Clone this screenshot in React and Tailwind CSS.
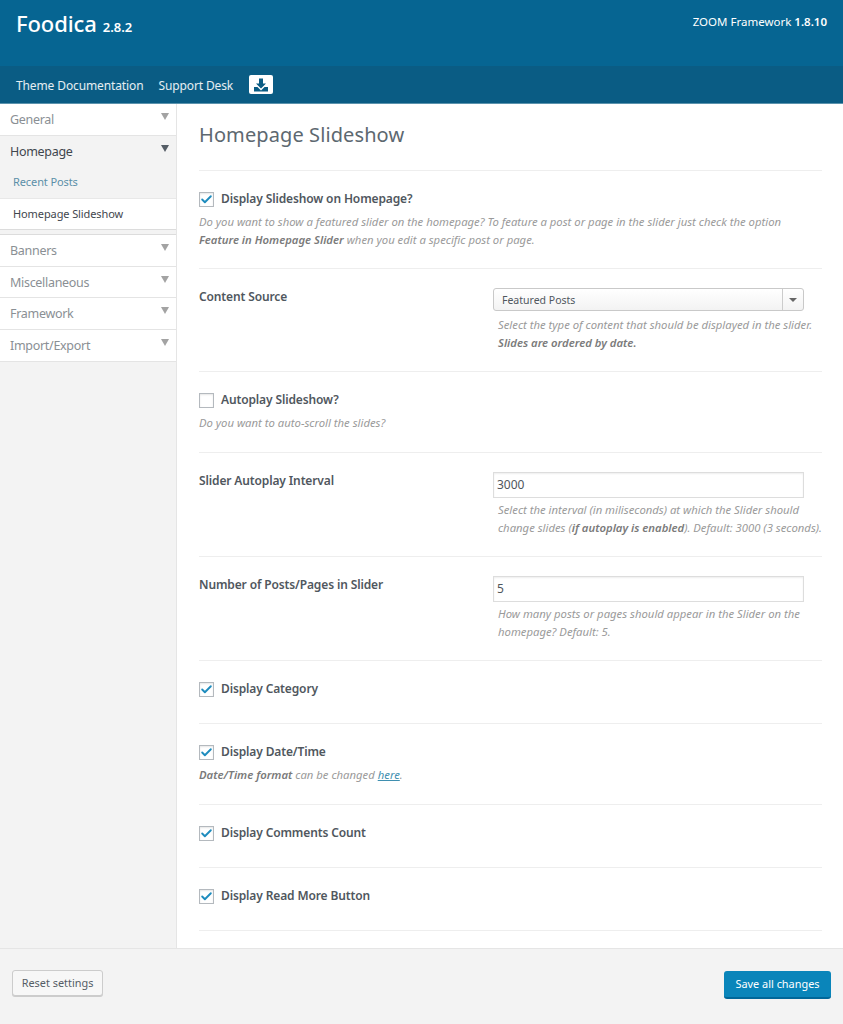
import { Check } from 'lucide-react';

const FONT = { fontFamily: '"Noto Sans", "Open Sans", sans-serif' };

function Caret({ dark }) {
  return (
    <span className={`block -mt-[8px] w-0 h-0 border-l-[4px] border-r-[4px] border-t-[7px] border-l-transparent border-r-transparent ${dark ? 'border-t-[#555d66]' : 'border-t-[#a3a3a3]'}`} />
  );
}

function MenuItem({ label, height = 'h-[31.7px] pt-[2px]' }) {
  return (
    <div className={`${height} bg-white border-b border-[#e4e4e4] flex items-center justify-between pl-[10px] pr-[7px]`}>
      <span className="text-[12.5px] tracking-[-0.3px] text-[#8a8f94]">{label}</span>
      <Caret />
    </div>
  );
}

function Sidebar() {
  return (
    <div className="w-[177px] shrink-0 bg-[#f3f3f3] border-r border-[#e5e5e5]">
      <MenuItem label="General" height="h-[32px] pt-[1px]" />
      <div className="h-[31px] flex items-center justify-between pl-[10px] pr-[7px] pt-[1px]">
        <span className="text-[12.5px] tracking-[-0.3px] text-[#3f464d]">Homepage</span>
        <Caret dark />
      </div>
      <div className="h-[31px] flex items-center pl-[13px]">
        <span className="text-[11px] tracking-[-0.1px] text-[#5b8fa8]">Recent Posts</span>
      </div>
      <div className="h-[31px] bg-white flex items-center pl-[13px] border-t border-[#e8e8e8]">
        <span className="text-[11px] tracking-[-0.1px] text-[#3f464d]">Homepage Slideshow</span>
      </div>
      <div className="h-[6px] border-y border-[#dcdcdc] bg-[#f3f3f3]" />
      <MenuItem label="Banners" />
      <MenuItem label="Miscellaneous" />
      <MenuItem label="Framework" />
      <MenuItem label="Import/Export" />
    </div>
  );
}

function CheckBox({ checked }) {
  return (
    <span className="w-[15px] h-[15px] shrink-0 bg-white border border-[#b4b9be] shadow-[inset_0_1px_2px_rgba(0,0,0,0.1)] flex items-center justify-center">
      {checked && <Check className="w-[13px] h-[13px] text-[#1e8cbe]" strokeWidth={3.5} />}
    </span>
  );
}

function CheckRow({ label, checked, height, children }) {
  return (
    <section className={`${height} border-b border-[#eeeeee] pt-[19px]`}>
      <div className="flex items-center gap-[7px] h-[18px]">
        <CheckBox checked={checked} />
        <span className="text-[12px] font-semibold tracking-[-0.13px] text-[#50575e]">{label}</span>
      </div>
      {children}
    </section>
  );
}

function Hint({ children, className = '' }) {
  return <p className={`text-[11.3px] leading-[18px] italic text-[#9a9a9a] ${className}`}>{children}</p>;
}

function FieldRow({ label, height, control, children }) {
  return (
    <section className={`${height} border-b border-[#eeeeee] flex pt-[19px]`}>
      <div className="w-[294px] shrink-0 text-[12px] font-semibold tracking-[-0.13px] text-[#50575e] leading-[18px]">{label}</div>
      <div className="flex-1 min-w-0">
        {control}
        <div className="mt-[3px] w-[331px] pl-[5px]">{children}</div>
      </div>
    </section>
  );
}

function TextBox({ value }) {
  return (
    <div className="w-[311px] h-[26px] bg-white border border-[#dddddd] shadow-[inset_0_1px_2px_rgba(0,0,0,0.07)] flex items-center pl-[3px] text-[12px] text-[#4f565c]">
      {value}
    </div>
  );
}

function SelectBox() {
  return (
    <div className="w-[311px] h-[23px] mb-[5px] bg-gradient-to-b from-white to-[#f3f3f3] border border-[#c9c9c9] rounded-[3px] flex items-center text-[10.5px] text-[#50575e]">
      <span className="flex-1 pl-[8px] pt-[2px]">Featured Posts</span>
      <span className="w-[21px] h-full border-l border-[#cccccc] flex items-center justify-center">
        <span className="w-0 h-0 border-l-[4px] border-r-[4px] border-t-[4px] border-l-transparent border-r-transparent border-t-[#666666]" />
      </span>
    </div>
  );
}

export default function App() {
  return (
    <div className="w-[843px] h-[1024px] flex flex-col bg-white overflow-hidden" style={FONT}>
      <header className="h-[66px] shrink-0 bg-[#066592] flex justify-between text-white">
        <div className="pl-[16px] pt-[8px] flex items-baseline gap-[6px]">
          <span className="text-[22px] leading-[30px] font-medium tracking-[-0.1px]">Foodica</span>
          <span className="text-[13px] font-semibold">2.8.2</span>
        </div>
        <div className="pr-[16px] pt-[13px] text-[11.5px] leading-[18px]">
          ZOOM Framework <b className="font-semibold">1.8.10</b>
        </div>
      </header>
      <nav className="h-[38px] shrink-0 bg-[#0a5c84] border-b border-[#5b93ad] flex items-center pl-[16px] text-[12px] tracking-[-0.12px] text-white/90">
        <span className="pt-[2px]">Theme Documentation</span>
        <span className="ml-[15px] pt-[2px]">Support Desk</span>
        <span className="ml-[16px] w-[24px] h-[19px] bg-white rounded-[2px] flex items-center justify-center">
          <svg viewBox="0 0 16 16" className="w-[16px] h-[16px] text-[#0a5c84]" fill="currentColor">
            <path d="M6 1.5h4v5h3L8 11.5 3 6.5h3z" />
            <path d="M1 10h3.5L8 13.5 11.5 10H15v4.5H1z" />
          </svg>
        </span>
      </nav>
      <div className="flex-1 flex min-h-0">
        <Sidebar />
        <main className="flex-1 min-w-0 pl-[22px] pr-[21px]">
          <div className="h-[67px] border-b border-[#eeeeee] pt-[16px]">
            <h1 className="text-[20px] leading-[30px] tracking-[0.1px] text-[#5d6870]">Homepage Slideshow</h1>
          </div>
          <CheckRow label="Display Slideshow on Homepage?" checked height="h-[98px]">
            <Hint className="mt-[5px]">
              Do you want to show a featured slider on the homepage? To feature a post or page in the slider just check the option <b className="font-semibold text-[#7a7a7a]">Feature in Homepage Slider</b> when you edit a specific post or page.
            </Hint>
          </CheckRow>
          <FieldRow label="Content Source" height="h-[103px]" control={<SelectBox />}>
            <Hint>
              Select the type of content that should be displayed in the slider. <b className="font-semibold text-[#7a7a7a]">Slides are ordered by date.</b>
            </Hint>
          </FieldRow>
          <CheckRow label="Autoplay Slideshow?" height="h-[81px]">
            <Hint className="mt-[5px]">Do you want to auto-scroll the slides?</Hint>
          </CheckRow>
          <FieldRow label="Slider Autoplay Interval" height="h-[104px]" control={<TextBox value="3000" />}>
            <Hint>
              Select the interval (in miliseconds) at which the Slider should change slides (<b className="font-semibold text-[#7a7a7a]">if autoplay is enabled</b>). Default: 3000 (3 seconds).
            </Hint>
          </FieldRow>
          <FieldRow label="Number of Posts/Pages in Slider" height="h-[104px]" control={<TextBox value="5" />}>
            <Hint>How many posts or pages should appear in the Slider on the homepage? Default: 5.</Hint>
          </FieldRow>
          <CheckRow label="Display Category" checked height="h-[63px]" />
          <CheckRow label="Display Date/Time" checked height="h-[81px]">
            <Hint className="mt-[5px]">
              <b className="font-semibold text-[#7a7a7a]">Date/Time format</b> can be changed <a className="underline text-[#3f8fb0]">here</a>.
            </Hint>
          </CheckRow>
          <CheckRow label="Display Comments Count" checked height="h-[63px]" />
          <CheckRow label="Display Read More Button" checked height="h-[63px]" />
        </main>
      </div>
      <footer className="h-[76px] shrink-0 bg-[#f3f3f3] border-t border-[#e5e5e5] flex items-start justify-between pl-[12px] pr-[12px] pt-[21px]">
        <button className="h-[26px] w-[91px] bg-[#f7f7f7] border border-[#cccccc] rounded-[3px] shadow-[0_1px_0_#cccccc] text-[10.9px] text-[#555d66]">Reset settings</button>
        <button className="h-[28px] w-[107px] mt-[1px] bg-[#0a85ba] border-b-2 border-[#006799] rounded-[3px] text-[10.9px] text-white">Save all changes</button>
      </footer>
    </div>
  );
}
